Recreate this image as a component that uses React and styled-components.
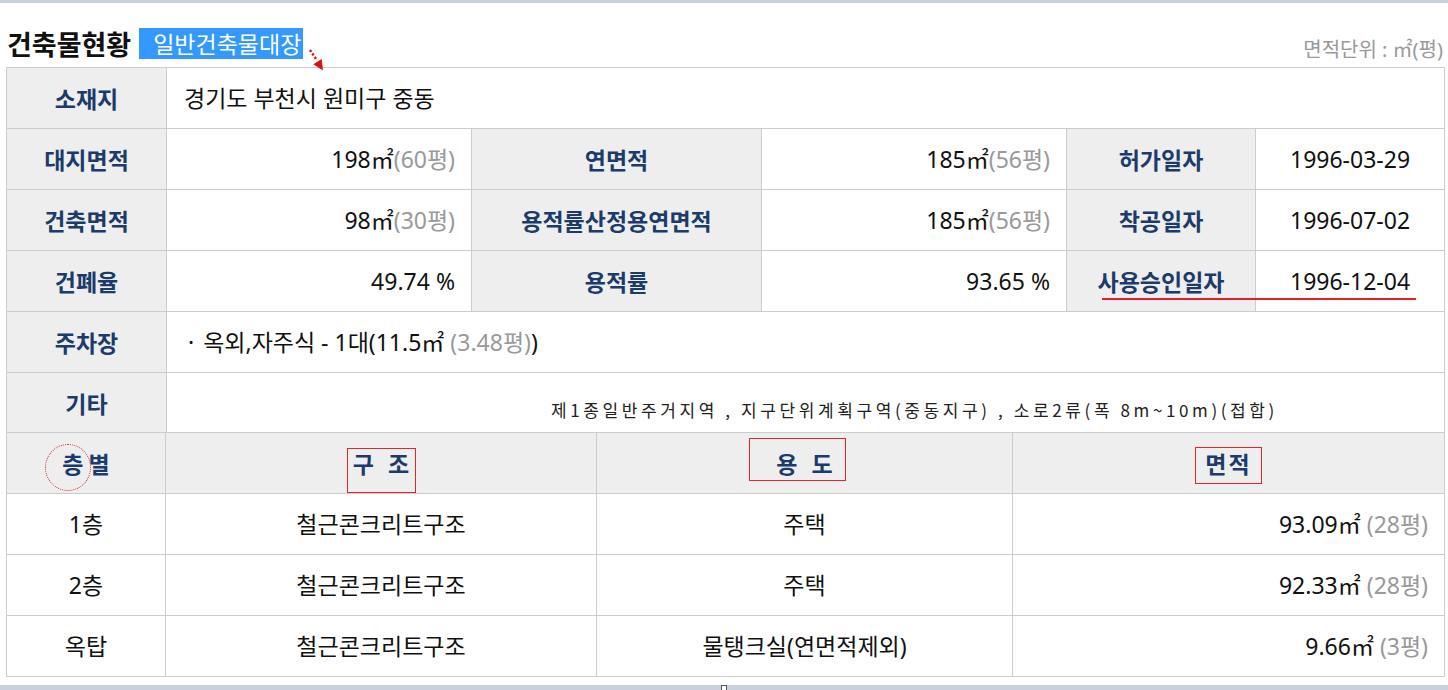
import styled, { createGlobalStyle, css } from "styled-components";

const GlobalStyle = createGlobalStyle`
  html, body {
    margin: 0;
    padding: 0;
    background: #fff;
  }
  body {
    font-family: "Noto Sans", "Noto Sans CJK KR", sans-serif;
    color: #111;
  }
`;

const Page = styled.div`
  width: 1448px;
  height: 690px;
  overflow: hidden;
  display: flex;
  flex-direction: column;
  & > * {
    flex: none;
  }
`;

const TopStrip = styled.div`
  height: 3px;
  background: #c8cfdc;
`;

const Header = styled.div`
  height: 64px;
  display: flex;
  align-items: flex-end;
  justify-content: space-between;
  padding: 0 5px 0 7px;
  box-sizing: border-box;
`;

const TitleGroup = styled.div`
  position: relative;
  display: flex;
  align-items: center;
  height: 31px;
  margin-bottom: 8px;
`;

const Title = styled.h2`
  margin: 0;
  font-family: "Noto Sans CJK KR", sans-serif;
  font-size: 27px;
  font-weight: 700;
  line-height: 31px;
  color: #111;
`;

const Selected = styled.span`
  margin-left: 8px;
  padding: 0 2px 0 14px;
  height: 31px;
  line-height: 31px;
  background: #3399ff;
  color: #fff;
  font-family: "Noto Sans CJK KR", sans-serif;
  font-size: 23px;
`;

const Pointer = styled.svg`
  position: absolute;
  left: 300px;
  top: 18px;
  overflow: visible;
`;

const Unit = styled.div`
  margin-bottom: 4px;
  font-size: 20px;
  line-height: 26px;
  color: #999;
`;

const Table = styled.table`
  width: 1439px;
  margin-left: 6px;
  border-collapse: separate;
  border-spacing: 0;
  table-layout: fixed;
  border-left: 1px solid #ccc;
  border-top: ${(p) => (p.$noTop ? "none" : "1px solid #ccc")};
`;

const Col = styled.col`
  width: ${(p) => p.$w}px;
`;

const cellBase = css`
  height: ${(p) => p.$h || 60}px;
  padding: 0;
  border-right: 1px solid #ccc;
  border-bottom: 1px solid #ccc;
  font-size: 23px;
  line-height: 30px;
  vertical-align: middle;
  white-space: nowrap;
`;

const Label = styled.th`
  ${cellBase};
  position: relative;
  background: #eeeeee;
  color: #1b3b6c;
  font-family: "Noto Sans CJK KR", sans-serif;
  font-weight: 700;
  text-align: center;
`;

const Value = styled.td`
  ${cellBase};
  color: #111;
  font-weight: 400;
  text-align: ${(p) => p.$align || "center"};
  padding-left: ${(p) => (p.$align === "left" ? "17px" : "0")};
  padding-right: ${(p) => (p.$align === "right" ? "16px" : "0")};
`;

const Note = styled.td`
  ${cellBase};
  height: 45px;
  padding: 14px 0 0 384px;
  font-family: "Noto Sans CJK KR", sans-serif;
  font-size: 17px;
  letter-spacing: 3.6px;
  color: #222;
  text-align: left;
`;

const Bullet = styled.span`
  margin: 0 9px 0 4px;
`;

const Sub = styled.span`
  color: #999;
`;

const Underline = styled.span`
  position: absolute;
  left: 35px;
  top: 47px;
  width: 314px;
  height: 2px;
  background: #e5202b;
  z-index: 2;
`;

const Boxed = styled.span`
  position: relative;
  display: inline-block;
  word-spacing: ${(p) => p.$gap || 0}px;
  letter-spacing: ${(p) => p.$ls || 0}px;
  &::after {
    content: "";
    position: absolute;
    left: ${(p) => p.$l}px;
    right: ${(p) => p.$r}px;
    top: ${(p) => p.$t}px;
    bottom: ${(p) => p.$b}px;
    border: 1px solid #e3262e;
  }
`;

const Circled = styled.span`
  position: relative;
  display: inline-block;
  &::after {
    content: "";
    position: absolute;
    left: -17px;
    top: -4px;
    width: 44px;
    height: 45px;
    border: 1px dotted #e02020;
    border-radius: 50%;
  }
`;

const BottomStrip = styled.div`
  margin-top: auto;
  height: 5px;
  background: #c9d1de;
  display: flex;
  justify-content: center;
`;

const Grip = styled.span`
  width: 4px;
  height: 4px;
  background: #fff;
  border: 1px solid #555;
`;

const Area = ({ m, p, gap }) => (
  <>
    {m}㎡{gap ? " " : ""}
    <Sub>({p}평)</Sub>
  </>
);

const floors = [
  { floor: "1층", structure: "철근콘크리트구조", use: "주택", m: "93.09", p: 28 },
  { floor: "2층", structure: "철근콘크리트구조", use: "주택", m: "92.33", p: 28 },
  { floor: "옥탑", structure: "철근콘크리트구조", use: "물탱크실(연면적제외)", m: "9.66", p: 3 },
];

export default function App() {
  return (
    <Page>
      <GlobalStyle />
      <TopStrip />
      <Header>
        <TitleGroup>
          <Title>건축물현황</Title>
          <Selected>일반건축물대장</Selected>
          <Pointer width="30" height="30" viewBox="0 0 30 30">
            <line x1="3" y1="4" x2="9" y2="13" stroke="#e01010" strokeWidth="2.4" strokeDasharray="2.2 2" />
            <polygon points="6.3,18.3 14.7,12.9 16,24.5" fill="#e01010" />
          </Pointer>
        </TitleGroup>
        <Unit>면적단위 : ㎡(평)</Unit>
      </Header>

      <Table>
        <colgroup>
          <Col $w={160} />
          <Col $w={305} />
          <Col $w={290} />
          <Col $w={305} />
          <Col $w={189} />
          <Col $w={189} />
        </colgroup>
        <tbody>
          <tr>
            <Label>소재지</Label>
            <Value colSpan={5} $align="left">경기도 부천시 원미구 중동</Value>
          </tr>
          <tr>
            <Label>대지면적</Label>
            <Value $align="right"><Area m="198" p={60} /></Value>
            <Label>연면적</Label>
            <Value $align="right"><Area m="185" p={56} /></Value>
            <Label>허가일자</Label>
            <Value>1996-03-29</Value>
          </tr>
          <tr>
            <Label>건축면적</Label>
            <Value $align="right"><Area m="98" p={30} /></Value>
            <Label>용적률산정용연면적</Label>
            <Value $align="right"><Area m="185" p={56} /></Value>
            <Label>착공일자</Label>
            <Value>1996-07-02</Value>
          </tr>
          <tr>
            <Label>건폐율</Label>
            <Value $align="right">49.74 %</Value>
            <Label>용적률</Label>
            <Value $align="right">93.65 %</Value>
            <Label>
              사용승인일자
              <Underline />
            </Label>
            <Value>1996-12-04</Value>
          </tr>
          <tr>
            <Label>주차장</Label>
            <Value colSpan={5} $align="left">
              <Bullet>·</Bullet>옥외,자주식 - 1대(11.5㎡ <Sub>(3.48평)</Sub>)
            </Value>
          </tr>
          <tr>
            <Label $h={59}>기타</Label>
            <Note colSpan={5}>
              제1종일반주거지역 , 지구단위계획구역(중동지구) , 소로2류(폭 8m~10m)(접합)
            </Note>
          </tr>
        </tbody>
      </Table>

      <Table $noTop>
        <colgroup>
          <Col $w={159} />
          <Col $w={431} />
          <Col $w={416} />
          <Col $w={432} />
        </colgroup>
        <tbody>
          <tr>
            <Label>
              <Circled>층</Circled> 별
            </Label>
            <Label>
              <Boxed $gap={9} $l={-6} $r={-7} $t={0} $b={-15}>구 조</Boxed>
            </Label>
            <Label>
              <Boxed $gap={9} $l={-27} $r={-13} $t={-10} $b={-3}>용 도</Boxed>
            </Label>
            <Label>
              <Boxed $ls={2} $l={-10} $r={-10} $t={-1} $b={-6}>면적</Boxed>
            </Label>
          </tr>
          {floors.map((f) => (
            <tr key={f.floor}>
              <Value>{f.floor}</Value>
              <Value>{f.structure}</Value>
              <Value>{f.use}</Value>
              <Value $align="right">
                <Area m={f.m} p={f.p} gap />
              </Value>
            </tr>
          ))}
        </tbody>
      </Table>

      <BottomStrip>
        <Grip />
      </BottomStrip>
    </Page>
  );
}
